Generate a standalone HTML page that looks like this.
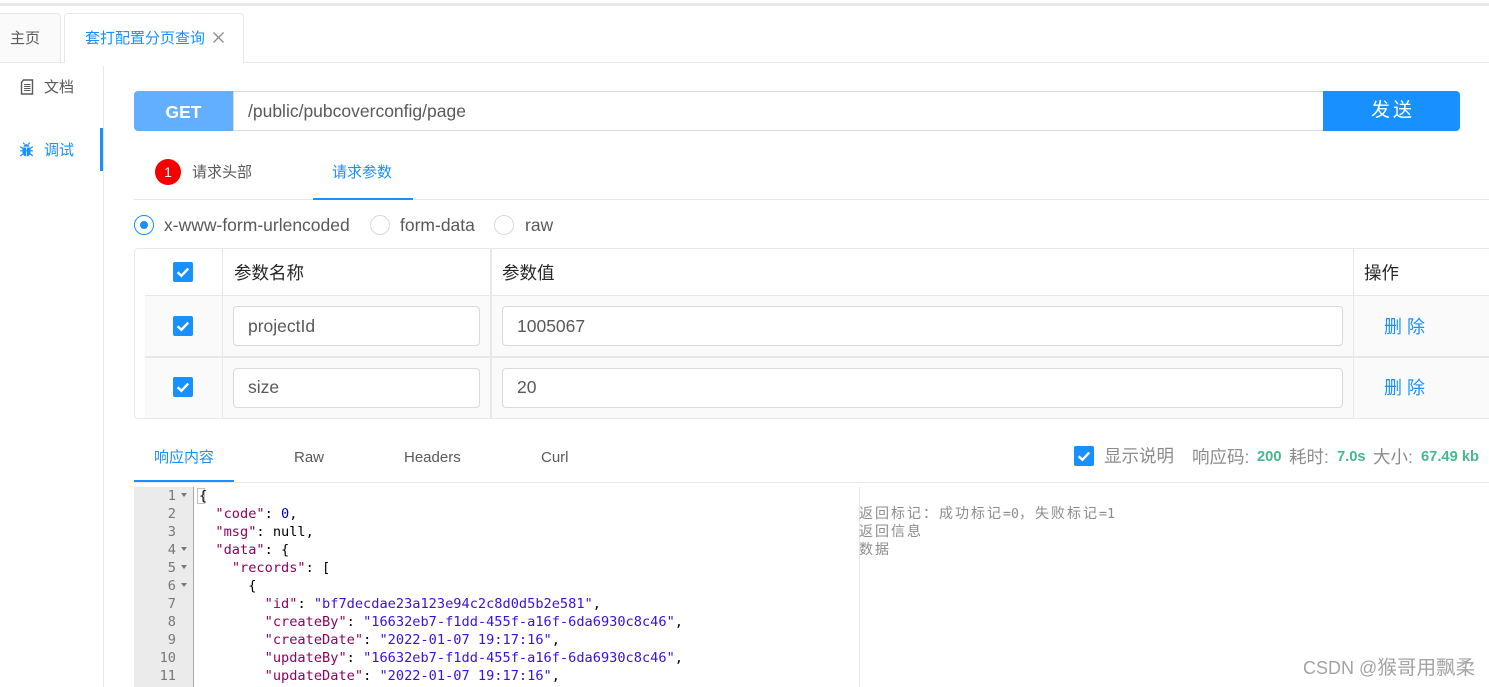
<!DOCTYPE html>
<html lang="zh">
<head>
<meta charset="utf-8">
<title>调试</title>
<style>
html,body{margin:0;padding:0;background:#fff;}
body{width:1489px;height:687px;position:relative;overflow:hidden;font-family:"Liberation Sans","Noto Sans CJK SC",sans-serif;color:#595959;}
.a{position:absolute;box-sizing:border-box;}
.t{position:absolute;white-space:nowrap;line-height:20px;}
.cb{position:absolute;width:20px;height:20px;background:#1890ff;border-radius:2px;}
.cb svg{position:absolute;left:0;top:0;}
.inp{position:absolute;box-sizing:border-box;background:#fff;border:1px solid #d9d9d9;border-radius:4px;height:40px;font-size:17.5px;line-height:38px;padding-left:14px;color:#595959;}
.radio{position:absolute;box-sizing:border-box;width:20px;height:20px;border-radius:50%;border:1px solid #d9d9d9;background:#fff;}
.code{position:absolute;left:199px;font-family:"DejaVu Sans Mono","Liberation Mono",monospace;font-size:13.63px;line-height:18px;white-space:pre;color:#000;}
.ln{position:absolute;left:134px;width:42px;text-align:right;font-family:"DejaVu Sans Mono","Liberation Mono",monospace;font-size:13.63px;line-height:18px;color:#777;}
.k{color:#92015f}.s{color:#3a10e0}.n{color:#0000cd}
.ar{position:absolute;left:181px;width:0;height:0;border-left:3.5px solid transparent;border-right:3.5px solid transparent;border-top:4px solid #777;}
.note{position:absolute;left:859px;font-family:"Noto Sans CJK SC","DejaVu Sans Mono",monospace;font-size:14px;letter-spacing:2px;line-height:18px;color:#8c8c8c;white-space:nowrap;}
.note b{font-weight:normal;font-family:"DejaVu Sans Mono",monospace;font-size:13.3px;letter-spacing:0;}
.g{color:#47b88e;font-weight:bold;font-size:14.7px;}
</style>
</head>
<body>
<!-- top strip -->
<div class="a" style="left:0;top:3px;width:1489px;height:3px;background:#e8eaec;"></div>

<!-- tabs -->
<div class="a" style="left:0;top:62px;width:1489px;height:1px;background:#e8e8e8;"></div>
<div class="a" style="left:-6px;top:13px;width:67px;height:49px;background:#fafafa;border:1px solid #e8e8e8;border-bottom:0;border-radius:4px 4px 0 0;"></div>
<div class="t" style="left:10px;top:29px;font-size:15px;color:#595959;">主页</div>
<div class="a" style="left:64px;top:13px;width:180px;height:50px;background:#fff;border:1px solid #e8e8e8;border-bottom:0;border-radius:4px 4px 0 0;"></div>
<div class="t" style="left:85px;top:29px;font-size:15px;color:#1890ff;">套打配置分页查询</div>
<svg class="a" style="left:212px;top:31px;" width="13" height="13" viewBox="0 0 13 13"><path d="M1.5 1.5L11.5 11.5M11.5 1.5L1.5 11.5" stroke="#8c8c8c" stroke-width="1.3" fill="none"/></svg>

<!-- sidebar -->
<div class="a" style="left:103px;top:66px;width:1px;height:621px;background:#e8e8e8;"></div>
<div class="a" style="left:100px;top:128px;width:3px;height:43px;background:#1890ff;"></div>
<svg class="a" style="left:20px;top:79px;" width="14" height="16" viewBox="0 0 14 16"><path d="M3.5 1H12.5V15H1.5V3.5Z" fill="#fff" stroke="#595959" stroke-width="1.4"/><path d="M4 5.5H10.5M4 7.5H10.5M4 9.5H10.5M4 11.5H10.5" stroke="#595959" stroke-width="1"/></svg>
<div class="t" style="left:44px;top:78px;font-size:15px;color:#595959;">文档</div>
<svg class="a" style="left:19px;top:142px;" width="15" height="15" viewBox="0 0 15 15"><path d="M3.5 5.5H11.5V10.5C11.5 12.8 9.5 14.5 7.5 14.5C5.5 14.5 3.5 12.8 3.5 10.5Z" fill="#1890ff"/><path d="M4.5 4.6C4.8 1.4 10.2 1.4 10.5 4.6Z" fill="#1890ff"/><path d="M7.5 5.5V14.5" stroke="#fff" stroke-width=".7"/><path d="M4.2 0.6L5.6 2.4M10.8 0.6L9.4 2.4M1 8.8H14M1.2 4.8L4 6.4M13.8 4.8L11 6.4M1.2 14L4 11.8M13.8 14L11 11.8" stroke="#1890ff" stroke-width="1.2" fill="none"/></svg>
<div class="t" style="left:44px;top:141px;font-size:15px;color:#1890ff;">调试</div>

<!-- url bar -->
<div class="a" style="left:134px;top:91px;width:99px;height:40px;background:#62aeff;border-radius:4px 0 0 4px;"></div>
<div class="t" style="left:134px;width:99px;text-align:center;top:102px;font-size:17.5px;font-weight:bold;color:#fff;">GET</div>
<div class="a" style="left:233px;top:91px;width:1091px;height:40px;background:#fff;border:1px solid #d9d9d9;border-right:0;"></div>
<div class="t" style="left:248px;top:101px;font-size:17.5px;color:#595959;">/public/pubcoverconfig/page</div>
<div class="a" style="left:1323px;top:91px;width:137px;height:40px;background:#1890ff;border-radius:0 4px 4px 0;box-shadow:0 2px 0 rgba(0,0,0,.03);"></div>
<div class="t" style="left:1323px;width:137px;text-align:center;top:101px;font-size:19px;color:#fff;letter-spacing:3px;text-indent:3px;">发送</div>

<!-- request tabs -->
<div class="a" style="left:134px;top:199px;width:1355px;height:1px;background:#e8e8e8;"></div>
<div class="a" style="left:313px;top:198px;width:100px;height:2px;background:#1890ff;"></div>
<div class="a" style="left:155px;top:159px;width:26px;height:26px;border-radius:50%;background:#f50000;"></div>
<div class="t" style="left:155px;width:26px;text-align:center;top:163px;font-size:14px;color:#fff;line-height:19px;">1</div>
<div class="t" style="left:192px;top:163px;font-size:15px;color:#595959;">请求头部</div>
<div class="t" style="left:332px;top:163px;font-size:15px;color:#1890ff;">请求参数</div>

<!-- radios -->
<div class="radio" style="left:134px;top:215px;border-color:#1890ff;"></div>
<div class="a" style="left:140px;top:221px;width:8px;height:8px;border-radius:50%;background:#1890ff;"></div>
<div class="t" style="left:164px;top:215px;font-size:17.5px;color:#595959;">x-www-form-urlencoded</div>
<div class="radio" style="left:370px;top:215px;"></div>
<div class="t" style="left:400px;top:215px;font-size:17.5px;color:#595959;">form-data</div>
<div class="radio" style="left:494px;top:215px;"></div>
<div class="t" style="left:525px;top:215px;font-size:17.5px;color:#595959;">raw</div>

<!-- params table -->
<div class="a" style="left:134px;top:248px;width:1365px;height:171px;border:1px solid #e8e8e8;border-radius:4px;"></div>
<div class="a" style="left:145px;top:296px;width:1344px;height:122px;background:#fafafa;"></div>
<div class="a" style="left:145px;top:295px;width:1344px;height:1px;background:#e8e8e8;"></div>
<div class="a" style="left:145px;top:356px;width:1344px;height:2px;background:#e8e8e8;"></div>
<div class="a" style="left:222px;top:249px;width:1px;height:169px;background:#e8e8e8;"></div>
<div class="a" style="left:490px;top:249px;width:2px;height:169px;background:#e8e8e8;"></div>
<div class="a" style="left:1353px;top:249px;width:1px;height:169px;background:#e8e8e8;"></div>

<div class="cb" style="left:173px;top:262px;"><svg width="20" height="20" viewBox="0 0 20 20"><path d="M4.6 10.2L8.4 13.8L15.2 6.6" stroke="#fff" stroke-width="2.4" fill="none"/></svg></div>
<div class="t" style="left:234px;top:263px;font-size:17.5px;color:#262626;">参数名称</div>
<div class="t" style="left:502px;top:263px;font-size:17.5px;color:#262626;">参数值</div>
<div class="t" style="left:1364px;top:263px;font-size:17.5px;color:#262626;">操作</div>

<div class="cb" style="left:173px;top:316px;"><svg width="20" height="20" viewBox="0 0 20 20"><path d="M4.6 10.2L8.4 13.8L15.2 6.6" stroke="#fff" stroke-width="2.4" fill="none"/></svg></div>
<div class="inp" style="left:233px;top:306px;width:247px;">projectId</div>
<div class="inp" style="left:502px;top:306px;width:841px;">1005067</div>
<div class="t" style="left:1384px;top:317px;font-size:18px;color:#1890ff;letter-spacing:5px;">删除</div>

<div class="cb" style="left:173px;top:377px;"><svg width="20" height="20" viewBox="0 0 20 20"><path d="M4.6 10.2L8.4 13.8L15.2 6.6" stroke="#fff" stroke-width="2.4" fill="none"/></svg></div>
<div class="inp" style="left:233px;top:368px;width:247px;line-height:37px;">size</div>
<div class="inp" style="left:502px;top:368px;width:841px;line-height:37px;">20</div>
<div class="t" style="left:1384px;top:378px;font-size:18px;color:#1890ff;letter-spacing:5px;">删除</div>

<!-- response tabs -->
<div class="a" style="left:134px;top:482px;width:1355px;height:1px;background:#e8e8e8;"></div>
<div class="a" style="left:134px;top:480px;width:100px;height:2px;background:#1890ff;"></div>
<div class="t" style="left:154px;top:448px;font-size:15px;color:#1890ff;">响应内容</div>
<div class="t" style="left:294px;top:448px;font-size:15px;color:#595959;">Raw</div>
<div class="t" style="left:404px;top:448px;font-size:15px;color:#595959;">Headers</div>
<div class="t" style="left:541px;top:448px;font-size:15px;color:#595959;">Curl</div>

<div class="cb" style="left:1074px;top:446px;"><svg width="20" height="20" viewBox="0 0 20 20"><path d="M4.6 10.2L8.4 13.8L15.2 6.6" stroke="#fff" stroke-width="2.4" fill="none"/></svg></div>
<div class="t" style="left:1104px;top:446px;font-size:17.5px;color:#8c8c8c;">显示说明</div>
<div class="t" style="left:1192px;top:447px;font-size:17.5px;color:#8c8c8c;">响应码:</div>
<div class="t g" style="left:1257px;top:447px;">200</div>
<div class="t" style="left:1289px;top:447px;font-size:17.5px;color:#8c8c8c;">耗时:</div>
<div class="t g" style="left:1337px;top:447px;">7.0s</div>
<div class="t" style="left:1373px;top:447px;font-size:17.5px;color:#8c8c8c;">大小:</div>
<div class="t g" style="left:1421px;top:447px;">67.49 kb</div>

<!-- editor -->
<div class="a" style="left:134px;top:487px;width:60px;height:200px;background:#ebebeb;border-right:1px solid #a8a8a8;"></div>
<div class="a" style="left:194px;top:487px;width:666px;height:200px;background:#fff;border-right:1px solid #e8e8e8;"></div>
<div class="a" style="left:197px;top:488px;width:8px;height:16px;border:1px solid #bfbfbf;"></div>

<div class="ln" style="top:487px;">1</div>
<div class="ln" style="top:505px;">2</div>
<div class="ln" style="top:523px;">3</div>
<div class="ln" style="top:541px;">4</div>
<div class="ln" style="top:559px;">5</div>
<div class="ln" style="top:577px;">6</div>
<div class="ln" style="top:595px;">7</div>
<div class="ln" style="top:613px;">8</div>
<div class="ln" style="top:631px;">9</div>
<div class="ln" style="top:649px;">10</div>
<div class="ln" style="top:667px;">11</div>
<div class="ar" style="top:493px;"></div>
<div class="ar" style="top:547px;"></div>
<div class="ar" style="top:565px;"></div>
<div class="ar" style="top:583px;"></div>

<div class="code" style="top:487px;">{</div>
<div class="code" style="top:505px;">  <span class="k">"code"</span>: <span class="n">0</span>,</div>
<div class="code" style="top:523px;">  <span class="k">"msg"</span>: null,</div>
<div class="code" style="top:541px;">  <span class="k">"data"</span>: {</div>
<div class="code" style="top:559px;">    <span class="k">"records"</span>: [</div>
<div class="code" style="top:577px;">      {</div>
<div class="code" style="top:595px;">        <span class="k">"id"</span>: <span class="s">"bf7decdae23a123e94c2c8d0d5b2e581"</span>,</div>
<div class="code" style="top:613px;">        <span class="k">"createBy"</span>: <span class="s">"16632eb7-f1dd-455f-a16f-6da6930c8c46"</span>,</div>
<div class="code" style="top:631px;">        <span class="k">"createDate"</span>: <span class="s">"2022-01-07 19:17:16"</span>,</div>
<div class="code" style="top:649px;">        <span class="k">"updateBy"</span>: <span class="s">"16632eb7-f1dd-455f-a16f-6da6930c8c46"</span>,</div>
<div class="code" style="top:667px;">        <span class="k">"updateDate"</span>: <span class="s">"2022-01-07 19:17:16"</span>,</div>

<div class="note" style="top:504px;">返回标记：成功标记<b>=0</b>，失败标记<b>=1</b></div>
<div class="note" style="top:522px;">返回信息</div>
<div class="note" style="top:540px;">数据</div>

<!-- watermark -->
<div class="t" style="left:1303px;top:658px;font-size:18px;color:#a3a3a3;">CSDN @<span style="font-size:19.6px;">猴哥用飘柔</span></div>
</body>
</html>
